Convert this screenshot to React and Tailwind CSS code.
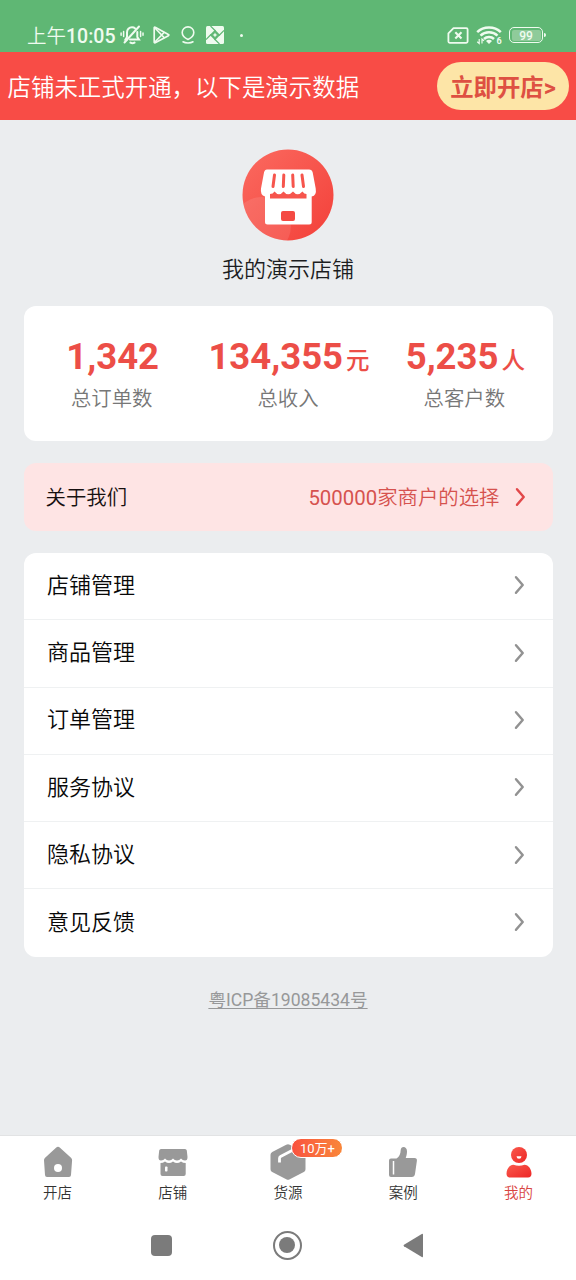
function IconeSilencio({ className }) {
  return (
    <svg viewBox="0 0 24 20" className={className} fill="none" stroke="currentColor" strokeLinecap="round">
      <path d="M7 14.5H5.5L7 12V7.5C7 4.5 9 2.300 12 2.300c1.300 0 2.400.4 3.200 1.100M17.300 7v5l1.700 2.500H10" strokeWidth="2" />
      <path d="M4.500 17.500 19 1.500" strokeWidth="2" />
      <path d="M10.500 17.600Q12.500 18.900 14.500 17.600" strokeWidth="2" />
      <path d="M3.600 6.500v5M1.100 8v2.200M20.600 6.500v5M23 8v2.200" strokeWidth="1.500" />
    </svg>
  )
}

function IconePlay({ className }) {
  return (
    <svg viewBox="0 0 17 18" className={className} fill="none" stroke="currentColor" strokeWidth="1.700" strokeLinejoin="round">
      <path d="M1.200 1.700v14.600c0 .5.5.7 1 .5L15.400 9.700c.6-.3.6-1 0-1.300L2.200 1.200c-.5-.3-1 0-1 .5z" />
      <path d="M1.500 1.500 11.500 12M1.500 16.500 11.500 6" />
    </svg>
  )
}

function IconeLocal({ className }) {
  return (
    <svg viewBox="0 0 14 18" className={className} fill="none" stroke="currentColor" strokeWidth="1.600" strokeLinecap="round">
      <path d="M7 13.400C4.500 12.300 1.200 9.900 1.200 6.500a5.800 5.600 0 0 1 11.600 0c0 3.400-3.300 5.800-5.800 6.900z" />
      <path d="M2 15.800c2.500 1.500 7.500 1.500 10 0" />
    </svg>
  )
}

// Quadrado claro com losango vazado e um brilho no centro
function IconeApp({ className }) {
  return (
    <svg viewBox="0 0 18 18" className={className}>
      <rect width="18" height="18" rx="1.500" fill="currentColor" />
      <path d="m9 3.800 5.200 5.200L9 14.200 3.800 9z" fill="#5fb774" />
      <path d="M4.500 0 9.500 5M18 4.500l-5 5M13.500 18l-5-5M0 13.500l5-5" stroke="#5fb774" strokeWidth="1.200" />
      <path d="m9 6.500.8 1.700 1.700.8-1.700.8L9 11.500l-.8-1.700L6.500 9l1.700-.8z" fill="currentColor" />
    </svg>
  )
}

function IconeSim({ className }) {
  return (
    <svg viewBox="0 0 22 17" className={className} fill="none" stroke="currentColor">
      <path d="M6.500 1.200h12.800c.8 0 1.300.4 1.300 1.200v12.200c0 .8-.5 1.200-1.300 1.200H2.700c-.8 0-1.300-.4-1.300-1.200V6.300z" strokeWidth="1.800" strokeLinejoin="round" />
      <path d="m8.300 5.200 6.200 6.200M14.500 5.200l-6.200 6.200" strokeWidth="2.100" />
    </svg>
  )
}

function IconeWifi({ className }) {
  return (
    <svg viewBox="0 0 26 19" className={className} fill="none" stroke="currentColor" strokeWidth="2.500">
      <path d="M1.200 6.200C7.500-.1 18.500-.1 24.800 6.200" />
      <path d="M4.500 9.600c4.700-4.500 12.300-4.500 17 0" />
      <path d="M8 13c2.700-2.600 7.300-2.600 10 0" />
      <path d="M10 15c1.700-1.600 4.300-1.600 6 0l-3 3z" fill="currentColor" stroke="none" />
      <path d="M3.200 13v4.500L1.200 15.800M6 17.500V13l2 1.700" strokeWidth="1.200" />
      <text x="20.500" y="18" fill="currentColor" stroke="none" className="font-['Roboto'] text-[9px] font-bold">6</text>
    </svg>
  )
}

function IconeSeta({ className }) {
  return (
    <svg viewBox="0 0 12 20" className={className} fill="none" stroke="currentColor" strokeWidth="2.500" strokeLinecap="round" strokeLinejoin="round">
      <path d="M2 2.300 8.700 10 2 17.700" />
    </svg>
  )
}

function LogoLoja({ className }) {
  return (
    <svg viewBox="0 0 92 92" className={className}>
      <defs>
        <linearGradient id="logo" x1="0" y1="0" x2="1" y2="1">
          <stop offset="0" stopColor="#fb6a60" />
          <stop offset="1" stopColor="#f34039" />
        </linearGradient>
        <clipPath id="circulo"><circle cx="46" cy="46" r="45.500" /></clipPath>
      </defs>
      <circle cx="46" cy="46" r="45.500" fill="url(#logo)" />
      <g clipPath="url(#circulo)" fill="#fff" fillOpacity=".1">
        <circle cx="20" cy="77" r="29" />
      </g>
      <path d="M25 20.500h42q3 0 3.700 3l3 16q1.200 7-4 8v25.500q0 2.500-2.500 2.500H25.500q-2.500 0-2.500-2.500V47.500q-5-1.500-4-8l3-16q.7-3 3-3z" fill="#fff" />
      <path d="m32.500 26-1.500 11.500M41.800 26l-.5 11.500M50.700 26l.5 11.500M60 26l1.500 11.500" stroke="#f6554d" strokeWidth="3" strokeLinecap="round" />
      <path d="M28 49.500V45q3 0 4.500-2.500 4.500 5.500 9 0 4.500 5.500 9.500 0 4.500 5.500 9.500 0 1.500 2.500 4 2.500v4.500z" fill="#f6554d" />
      <rect x="39" y="62" width="14" height="10" rx="2" fill="#f44a43" />
    </svg>
  )
}

function IconeCasa({ className }) {
  return (
    <svg viewBox="0 0 32 36" className={className}>
      <path d="M14 3.800q2-2 4 0l11 10q1.200 1.100 1.100 2.500L29 31q-.1 2-2 2H5q-1.900 0-2-2l-1-14.700q-.1-1.400 1.100-2.500z" fill="currentColor" />
      <circle cx="16" cy="24" r="4" fill="#fff" />
    </svg>
  )
}

function IconeLoja({ className }) {
  return (
    <svg viewBox="0 0 32 36" className={className}>
      <path d="M4 5h24q1.500 0 1.800 1.500L30.500 13q.1 3.500-2.500 3.500-2.500 0-4-2-1.500 2-4 2t-4-2q-1.500 2-4 2t-4-2q-1.500 2-4 2-2.600 0-2.500-3.500L2.200 6.500Q2.500 5 4 5z" fill="currentColor" />
      <path d="M3.500 19q2.500 0 4.500-1.500 2 1.500 4 1.500t4-1.500q2 1.500 4 1.500t4-1.500q2 1.500 4.700 1.500v11q0 2-2 2H5.500q-2 0-2-2z" fill="currentColor" />
      <rect x="8" y="22.500" width="2.500" height="5" rx=".8" fill="#fff" />
    </svg>
  )
}

function IconeCaixa({ className }) {
  return (
    <svg viewBox="0 0 36 36" className={className}>
      <path d="M16.200.8q1.800-1 3.600 0l14 7.200q1.700.9 1.700 2.800v14.400q0 1.900-1.700 2.800l-14 7.200q-1.800 1-3.600 0l-14-7.200Q.5 27.100.5 25.200V10.800Q.5 8.900 2.200 8z" fill="currentColor" />
      <path d="M9.500 18.500v-4.200q0-1.200 1.100-1.800L22.500 6.300" fill="none" stroke="#fff" strokeWidth="2.800" />
    </svg>
  )
}

function IconeJoinha({ className }) {
  return (
    <svg viewBox="0 0 32 36" className={className}>
      <path d="M4 14.500h5.500c3-2 4-4.500 4.200-8.500.2-2 1.300-3 2.800-3 2 0 3.500 1.500 3.500 4.500 0 2.500-.6 4.500-1.300 6.500h8.800q2.700 0 2.400 2.700L28 30q-.5 3-3.300 3H4q-2 0-2-2V16.500q0-2 2-2z" fill="currentColor" />
      <path d="M6.500 17v13.500" stroke="#fff" strokeWidth="1.500" />
    </svg>
  )
}

function IconePessoa({ className }) {
  return (
    <svg viewBox="0 0 32 36" className={className}>
      <defs>
        <linearGradient id="pessoa" x1="0" y1="0" x2="1" y2="1">
          <stop offset="0" stopColor="#fa5a4d" />
          <stop offset="1" stopColor="#ed2626" />
        </linearGradient>
      </defs>
      <circle cx="17" cy="11" r="8" fill="url(#pessoa)" />
      <path d="M14.500 12.200h5q-.2 2.600-2.500 2.600t-2.500-2.600z" fill="#fff" />
      <path d="M11.500 20.700q5.500 2 11 0c4 0 7 4.500 7 9 0 2.300-1.200 3.800-3.500 3.800H8c-2.300 0-3.500-1.500-3.500-3.800 0-4.500 3-9 7-9z" fill="url(#pessoa)" />
    </svg>
  )
}

const resumo = [
  { valor: '1,342', rotulo: '总订单数' },
  { valor: '134,355', unidade: '元', rotulo: '总收入' },
  { valor: '5,235', unidade: '人', rotulo: '总客户数' },
]

const menu = ['店铺管理', '商品管理', '订单管理', '服务协议', '隐私协议', '意见反馈']

const abas = [
  { nome: '开店', Icone: IconeCasa },
  { nome: '店铺', Icone: IconeLoja },
  { nome: '货源', Icone: IconeCaixa, selo: '10万+' },
  { nome: '案例', Icone: IconeJoinha },
  { nome: '我的', Icone: IconePessoa, ativa: true },
]

function BarraStatus() {
  return (
    <div className="flex h-[52px] shrink-0 items-end bg-[#5fb774] pl-[27px] pr-[30px] text-[#effbef]">
      <div className="flex h-[34px] items-center">
        <span className="whitespace-nowrap pt-1 text-[19.500px] leading-none">上午<span className="font-medium">10:05</span></span>
        <IconeSilencio className="ml-1 h-5 w-6" />
        <IconePlay className="ml-[9px] h-[18px] w-[17px]" />
        <IconeLocal className="ml-[11px] h-[18px] w-3.5" />
        <IconeApp className="ml-[11px] h-[18px] w-[18px]" />
        <span className="ml-4 h-[3px] w-[3px] rounded-full bg-current" />
      </div>
      <div className="ml-auto flex h-[34px] items-center">
        <IconeSim className="h-[17px] w-[22px]" />
        <IconeWifi className="ml-[7px] h-[19px] w-[26px]" />
        <span className="ml-[7px] flex h-4 w-[34px] rounded-[5px] border-[1.500px] border-current p-[1.500px]">
          <span className="flex flex-1 items-center justify-center rounded-[2px] bg-[#8fcb9a] pt-px text-[12px] font-medium leading-none">99</span>
        </span>
        <span className="ml-px h-1 w-0.5 rounded-r bg-current" />
      </div>
    </div>
  )
}

function Aviso() {
  return (
    <div className="flex h-[68px] shrink-0 items-center justify-between bg-[#f84c46] pl-[7.500px] pr-[7px]">
      <p className="whitespace-nowrap pt-1.5 text-[23.450px] text-white">店铺未正式开通，以下是演示数据</p>
      <button type="button" className="flex h-12 w-[132px] items-center justify-center whitespace-nowrap rounded-full bg-[#fde5a7] pt-[5px] text-[23.400px] font-bold text-[#de5042]">
        立即开店&gt;
      </button>
    </div>
  )
}

function Resumo() {
  return (
    <section className="mt-5 grid h-[135px] grid-cols-3 rounded-xl bg-white pt-[27px]">
      {resumo.map((r) => (
        <div key={r.rotulo} className="flex flex-col items-center">
          <p className="flex h-12 items-baseline whitespace-nowrap pl-0.5 text-[36.500px] font-bold leading-[48px] text-[#ec4e47]">
            {r.valor}
            {r.unidade && <span className="ml-[3px] text-[23.500px] font-medium leading-none">{r.unidade}</span>}
          </p>
          <p className="text-[20.400px] leading-9 text-[#777]">{r.rotulo}</p>
        </div>
      ))}
    </section>
  )
}

function BarraAbas() {
  return (
    <nav className="grid h-[75px] shrink-0 grid-cols-5 border-t border-[#e2e3e4] bg-white pt-2">
      {abas.map(({ nome, Icone, selo, ativa }) => (
        <div key={nome} className="relative flex flex-col items-center">
          <Icone className="h-9 w-9 text-[#999]" />
          {selo && (
            <span className="absolute -top-[6px] left-[61px] flex h-5 w-[52px] items-center justify-center rounded-full border border-white bg-linear-to-r from-[#f9513f] to-[#f98639] text-[13px] font-normal leading-none text-white">
              {selo}
            </span>
          )}
          <span className={`mt-0.5 text-[14.500px] leading-6 ${ativa ? 'text-[#d9453f]' : 'text-[#333]'}`}>{nome}</span>
        </div>
      ))}
    </nav>
  )
}

function BarraNavegacao() {
  return (
    <div className="flex h-[70px] shrink-0 items-center justify-center bg-white pr-0.5 text-[#7b7b7b]">
      <span className="h-[21px] w-[21px] rounded-[4px] bg-current" />
      <span className="ml-[101px] flex h-[29px] w-[29px] items-center justify-center rounded-full border-2 border-current">
        <span className="h-4 w-4 rounded-full bg-current" />
      </span>
      <svg viewBox="0 0 21 25" className="ml-[101px] h-[25px] w-[21px]">
        <path d="M1 11.700 18.800.9q1.200-.6 1.200.8v21.600q0 1.400-1.200.8L1 13.300q-1-.8 0-1.600z" fill="currentColor" />
      </svg>
    </div>
  )
}

export default function App() {
  return (
    <div className="flex h-[1280px] w-[576px] flex-col overflow-hidden bg-[#ebedef] font-['Roboto','Noto_Sans_CJK_SC',sans-serif] font-[350]">
      <BarraStatus />
      <Aviso />

      <main className="flex flex-1 flex-col px-[23.500px] pt-[29px]">
        <LogoLoja className="h-[92px] w-[92px] shrink-0 self-center" />
        <h1 className="mt-[13px] text-center text-[22px] font-[350] leading-8 text-[#1c1d1f]">我的演示店铺</h1>

        <Resumo />

        <div className="mt-[22px] flex h-[68px] items-center rounded-xl bg-[#fee4e4] pl-[22px] pr-[26px] text-[20.400px]">
          <span className="pt-[3px] text-[#161010]">关于我们</span>
          <span className="ml-auto pt-[3px] text-[#d6524e]"><span className="font-normal">500000</span>家商户的选择</span>
          <IconeSeta className="ml-[15px] h-5 w-3 text-[#e2484a]" />
        </div>

        <ul className="mt-[22px] rounded-xl bg-white">
          {menu.map((item) => (
            <li key={item} className="flex h-[67.300px] items-center justify-between border-b border-[#eff1f2] pb-[1.500px] pl-[23.500px] pr-[27px] text-[22px] text-[#080808] last:border-b-0">
              {item}
              <IconeSeta className="h-5 w-3 text-[#929292]" />
            </li>
          ))}
        </ul>

        <p className="mt-7 text-center text-[17.600px] font-normal leading-[30px] text-[#979899] underline underline-offset-2">粤ICP备19085434号</p>
      </main>

      <BarraAbas />
      <BarraNavegacao />
    </div>
  )
}
